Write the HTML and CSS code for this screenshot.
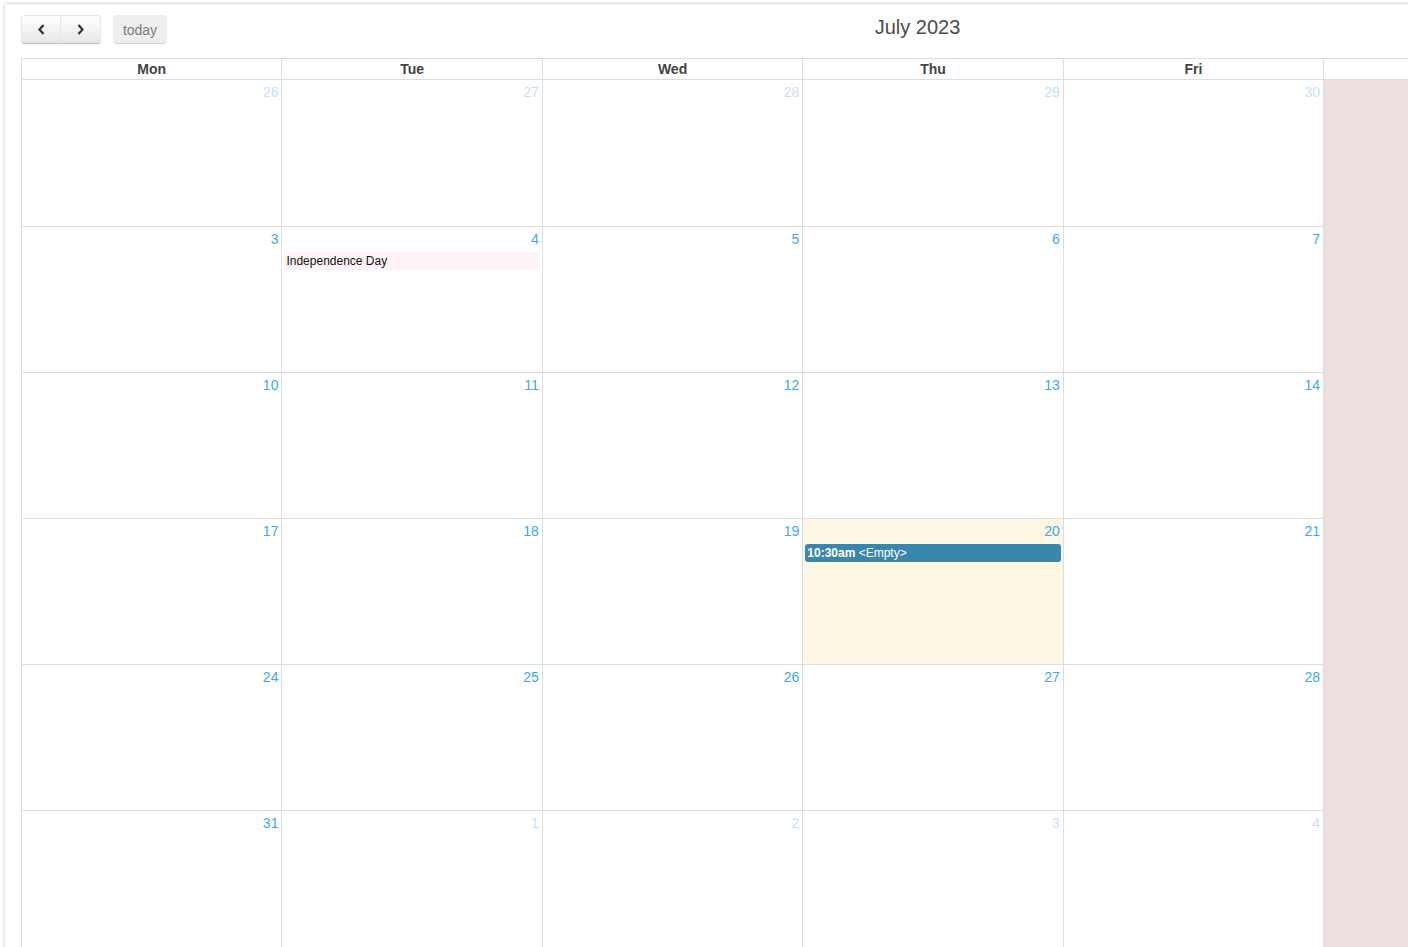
FILE: index.html
```html
<!DOCTYPE html>
<html lang="en">
<head>
<meta charset="utf-8">
<title>Calendar</title>
<link rel="stylesheet" href="styles.css">
</head>
<body>
<div class="panel">
  <div class="toolbar">
    <div class="tb-left">
      <div class="btn-group">
        <button class="btn btn-prev" type="button" aria-label="prev">
          <svg width="9" height="11" viewBox="0 0 9 11"><polyline points="6.5,1 2.5,5.5 6.5,10" fill="none" stroke="#333" stroke-width="2.2"/></svg>
        </button>
        <button class="btn btn-next" type="button" aria-label="next">
          <svg width="9" height="11" viewBox="0 0 9 11"><polyline points="2.5,1 6.5,5.5 2.5,10" fill="none" stroke="#333" stroke-width="2.2"/></svg>
        </button>
      </div>
      <button class="btn btn-today" type="button" disabled>today</button>
    </div>
    <h2 class="title">July 2023</h2>
    <div class="tb-right"></div>
  </div>

  <div class="grid">
    <div class="head">Mon</div>
    <div class="head">Tue</div>
    <div class="head">Wed</div>
    <div class="head">Thu</div>
    <div class="head">Fri</div>
    <div class="head"></div>
    <div class="head"></div>

    <div class="day other"><div class="num">26</div></div>
    <div class="day other"><div class="num">27</div></div>
    <div class="day other"><div class="num">28</div></div>
    <div class="day other"><div class="num">29</div></div>
    <div class="day other"><div class="num">30</div></div>
    <div class="day weekend"></div>
    <div class="day weekend"></div>

    <div class="day"><div class="num">3</div></div>
    <div class="day"><div class="num">4</div><div class="event holiday">Independence Day</div></div>
    <div class="day"><div class="num">5</div></div>
    <div class="day"><div class="num">6</div></div>
    <div class="day"><div class="num">7</div></div>
    <div class="day weekend"></div>
    <div class="day weekend"></div>

    <div class="day"><div class="num">10</div></div>
    <div class="day"><div class="num">11</div></div>
    <div class="day"><div class="num">12</div></div>
    <div class="day"><div class="num">13</div></div>
    <div class="day"><div class="num">14</div></div>
    <div class="day weekend"></div>
    <div class="day weekend"></div>

    <div class="day"><div class="num">17</div></div>
    <div class="day"><div class="num">18</div></div>
    <div class="day"><div class="num">19</div></div>
    <div class="day today"><div class="num">20</div><div class="event timed"><b>10:30am</b> &lt;Empty&gt;</div></div>
    <div class="day"><div class="num">21</div></div>
    <div class="day weekend"></div>
    <div class="day weekend"></div>

    <div class="day"><div class="num">24</div></div>
    <div class="day"><div class="num">25</div></div>
    <div class="day"><div class="num">26</div></div>
    <div class="day"><div class="num">27</div></div>
    <div class="day"><div class="num">28</div></div>
    <div class="day weekend"></div>
    <div class="day weekend"></div>

    <div class="day"><div class="num">31</div></div>
    <div class="day other"><div class="num">1</div></div>
    <div class="day other"><div class="num">2</div></div>
    <div class="day other"><div class="num">3</div></div>
    <div class="day other"><div class="num">4</div></div>
    <div class="day weekend"></div>
    <div class="day weekend"></div>
  </div>
</div>
</body>
</html>
```

FILE: styles.css
```css
html, body {
  margin: 0;
  padding: 0;
  overflow: hidden;
  background: #fff;
}
body {
  font-family: "Liberation Sans", Arial, sans-serif;
  font-size: 14px;
  color: #333;
}
.panel {
  margin: 4px 0 0 5px;
  width: 1855px;
  padding: 11px 0 40px 16px;
  box-shadow: 0 0 3px rgba(0, 0, 0, 0.28);
  background: #fff;
}
.toolbar {
  display: flex;
  align-items: flex-start;
  width: 1824px;
  height: 28px;
  margin-bottom: 15px;
}
.tb-left {
  display: flex;
  flex: none;
}
.tb-right {
  flex: none;
  width: 177px;
}
.title {
  flex: 1;
  margin: 0;
  text-align: center;
  font-size: 20px;
  font-weight: normal;
  line-height: 24px;
  color: #4c4c4c;
}
.btn-group {
  display: flex;
}
.btn {
  height: 29px;
  margin: 0;
  padding: 0 8px;
  font-family: "Liberation Sans", Arial, sans-serif;
  font-size: 14px;
  color: #333;
  border: 1px solid;
  border-color: #e6e6e6 #e6e6e6 #bfbfbf;
  background-color: #f5f5f5;
  background-image: linear-gradient(to bottom, #ffffff, #e6e6e6);
  box-shadow: inset 0 1px 0 rgba(255, 255, 255, 0.2), 0 1px 2px rgba(0, 0, 0, 0.05);
  display: flex;
  align-items: center;
  justify-content: center;
}
.btn-prev {
  width: 40px;
  border-radius: 4px 0 0 4px;
}
.btn-next {
  margin-left: -1px;
  width: 41px;
  border-radius: 0 4px 4px 0;
}
.btn-today {
  margin-left: 12px;
  width: 54px;
  border-radius: 4px;
  background-image: none;
  background-color: #e6e6e6;
  box-shadow: none;
  opacity: 0.65;
}
.grid {
  display: grid;
  grid-template-columns: repeat(7, 1fr);
  grid-template-rows: 21px 147px repeat(5, 146px);
  width: 1823px;
  border-left: 1px solid #ddd;
  border-top: 1px solid #ddd;
}
.head {
  border-right: 1px solid #ddd;
  border-bottom: 1px solid #ddd;
  text-align: center;
  font-weight: bold;
  font-size: 14px;
  line-height: 20px;
  color: #444;
}
.day {
  border-right: 1px solid #ddd;
  border-bottom: 1px solid #ddd;
  min-width: 0;
}
.day.today {
  background: #fcf6e2;
}
.day.weekend {
  background: #ebdfdf;
  border-bottom-color: #ebdfdf;
}
.num {
  height: 17px;
  padding: 4px 3px 0 0;
  text-align: right;
  font-size: 14px;
  line-height: 17px;
  color: #3ea7ee;
}
.day.other .num {
  color: #c2e1f6;
}
.event {
  margin: 4px 2px 0;
  height: 18px;
  padding: 0 2px;
  border-radius: 3px;
  font-size: 12px;
  line-height: 18px;
  white-space: nowrap;
  overflow: hidden;
}
.event.holiday {
  background: #fff4f5;
  color: #111;
}
.event.timed {
  background: #3a87ad;
  color: #fff;
}
.event.timed b {
  font-weight: bold;
}
```
